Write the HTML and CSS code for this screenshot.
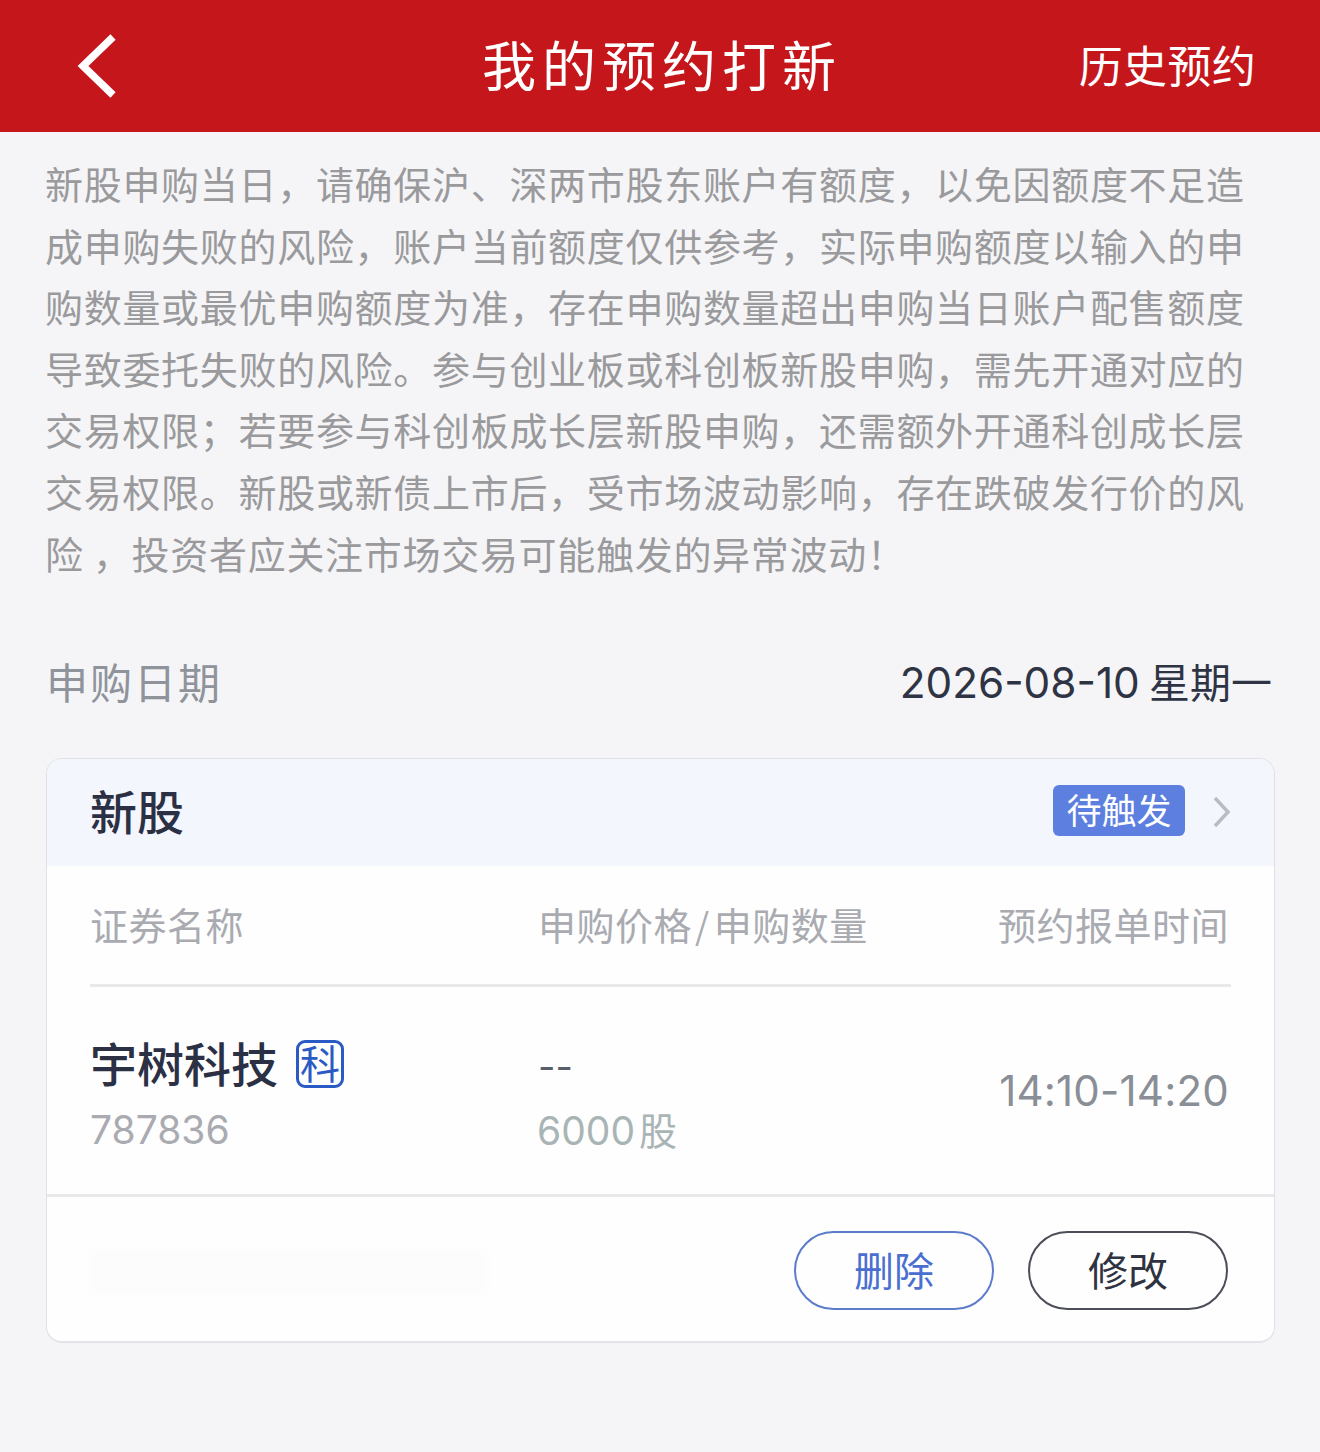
FILE: index.html
```html
<!DOCTYPE html>
<html lang="zh-CN">
<head>
<meta charset="utf-8">
<title>我的预约打新</title>
<link rel="stylesheet" href="styles.css">
</head>
<body>
<header class="topbar">
  <svg class="back" viewBox="0 0 40 64" width="40" height="64"><path d="M36 3 L6 32 L36 61" fill="none" stroke="#fff" stroke-width="7.5" stroke-linejoin="miter"/></svg>
  <h1 class="title">我的预约打新</h1>
  <span class="history">历史预约</span>
</header>
<main class="page">
  <div class="notice">
    <span class="ln">新股申购当日，请确保沪、深两市股东账户有额度，以免因额度不足造</span>
    <span class="ln">成申购失败的风险，账户当前额度仅供参考，实际申购额度以输入的申</span>
    <span class="ln">购数量或最优申购额度为准，存在申购数量超出申购当日账户配售额度</span>
    <span class="ln">导致委托失败的风险。参与创业板或科创板新股申购，需先开通对应的</span>
    <span class="ln">交易权限；若要参与科创板成长层新股申购，还需额外开通科创成长层</span>
    <span class="ln">交易权限。新股或新债上市后，受市场波动影响，存在跌破发行价的风</span>
    <span class="ln last">险 ，投资者应关注市场交易可能触发的异常波动！</span>
  </div>
  <div class="date-row">
    <span class="date-label">申购日期</span>
    <span class="date-value"><span class="date-num">2026-08-10</span> 星期一</span>
  </div>
  <section class="card">
    <div class="card-head">
      <span class="card-title">新股</span>
      <span class="status">待触发</span>
      <svg class="chev" viewBox="0 0 18 32" width="18" height="32"><path d="M2 2 L15 16 L2 30" fill="none" stroke="#b9bcc3" stroke-width="3.5"/></svg>
    </div>
    <div class="card-body">
      <div class="cols">
        <span class="c1">证券名称</span>
        <span class="c2">申购价格<span class="slash">/</span>申购数量</span>
        <span class="c3">预约报单时间</span>
      </div>
      <div class="row">
        <div class="c1 stack-name">
          <div class="name">宇树科技<span class="tag">科</span></div>
          <div class="code">787836</div>
        </div>
        <div class="c2 stack-qty">
          <div class="price">--</div>
          <div class="qty">6000<span class="unit">股</span></div>
        </div>
        <div class="c3 time">14:10-14:20</div>
      </div>
    </div>
    <div class="actions">
      <div class="smudge"></div>
      <button class="btn del">删除</button>
      <button class="btn edit">修改</button>
    </div>
  </section>
</main>
</body>
</html>
```
FILE: styles.css
```css
* { box-sizing: border-box; }
html, body { margin: 0; padding: 0; }
body {
  width: 1320px;
  height: 1452px;
  overflow: hidden;
  background: #f5f5f7;
  font-family: "Noto Sans CJK SC", "Liberation Sans", sans-serif;
}
.topbar {
  height: 132px;
  background: #c5161c;
  display: grid;
  grid-template-columns: 1fr auto 1fr;
  align-items: center;
  padding: 0 64px 4px 77px;
  color: #fff;
}
.title {
  margin: 0;
  padding-right: 9px;
  font-size: 54px;
  font-weight: 400;
  letter-spacing: 6px;
  line-height: 1;
}
.history { font-size: 44px; line-height: 1; justify-self: end; letter-spacing: 0.3px; }
.back { display: block; margin-top: 4px; }
.page { padding: 20px 46px 0 45px; }
.notice {
  color: #9a9a9d;
  font-size: 38px;
  line-height: 61.6px;
  width: 1199px;
}
.ln { display: block; text-align: justify; text-align-last: justify; white-space: nowrap; }
.ln.last { text-align-last: left; letter-spacing: 0.7px; }
.date-row {
  display: flex;
  justify-content: space-between;
  align-items: center;
  margin-top: 67px;
  height: 60px;
  padding: 0 2px 0 1px;
}
.date-label { font-size: 42px; color: #8f939b; letter-spacing: 2px; }
.date-value { font-size: 41px; color: #2f3445; }
.date-num { font-family: "Inter", sans-serif; font-size: 42.3px; }
.card {
  margin: 48px 0 0 1px;
  width: 1229px;
  height: 585px;
  border: 1.5px solid #dfe1e6;
  border-bottom: 2.5px solid #e3e4e8;
  border-radius: 16px;
  background: #fefefe;
  overflow: hidden;
  display: flex;
  flex-direction: column;
}
.card-head {
  height: 107px;
  background: #f3f6fc;
  display: flex;
  align-items: center;
  padding: 0 43px 0 43px;
}
.card-title { font-size: 47px; font-weight: 500; color: #2b3044; margin: -6px auto 0 0; line-height: 1; }
.status {
  background: #5d7fe0;
  color: #fff;
  font-size: 35px;
  line-height: 48px;
  height: 51px;
  width: 132px;
  text-align: center;
  border-radius: 6px;
  margin: -4px 28px 0 0;
}
.chev { display: block; margin-top: -2px; }
.card-body { padding: 0 43px; }
.cols {
  display: flex;
  height: 121px;
  align-items: center;
  border-bottom: 3px solid #e8e9eb;
  padding-bottom: 4px;
  color: #a9abb1;
  font-size: 38px;
  letter-spacing: 0.5px;
}
.c1 { width: 448px; }
.c2 { width: 360px; }
.c3 { flex: 1; text-align: right; padding-right: 2px; }
.slash { margin: 0 4px 0 3px; font-size: 36px; }
.row {
  display: flex;
  height: 210px;
  align-items: center;
  margin: 0 -43px;
  padding: 0 43px;
  border-bottom: 3px solid #e8e9eb;
}
.stack-name { padding-top: 7px; }
.stack-qty { padding-top: 12px; }
.name {
  font-size: 47px;
  font-weight: 500;
  color: #2b3044;
  line-height: 56px;
  display: flex;
  align-items: center;
}
.tag {
  margin: 4px 0 0 18px;
  width: 48px;
  height: 48px;
  border: 3px solid #2a5bc4;
  border-radius: 9px;
  color: #2a5bc4;
  font-size: 40px;
  font-weight: 400;
  line-height: 39px;
  text-align: center;
}
.code { font-size: 39px; color: #a9abb1; font-family: "Inter", sans-serif; margin-top: 15px; line-height: 50px; }
.price { font-size: 38px; color: #5a5e6a; line-height: 56px; font-family: "Inter", sans-serif; }
.qty { font-size: 39px; color: #a9b5b5; margin: 10px 0 0 -1px; line-height: 50px; font-family: "Inter", "Noto Sans CJK SC", sans-serif; }
.unit { margin-left: 4px; font-size: 38px; font-family: "Noto Sans CJK SC", sans-serif; }
.time { font-size: 42px; color: #8a8e96; font-family: "Inter", sans-serif; letter-spacing: 0.2px; }
.actions {
  flex: 1;
  display: flex;
  justify-content: flex-end;
  align-items: flex-start;
  gap: 34px;
  padding: 34px 46px 0 0;
}
.smudge {
  width: 396px;
  height: 44px;
  margin: 20px auto 0 44px;
  background: #fcfcfc;
  filter: blur(2px);
}
.btn {
  width: 200px;
  height: 79px;
  border-radius: 40px;
  background: transparent;
  font-family: inherit;
  font-size: 40px;
  line-height: 1;
  padding: 0 0 3px;
}
.del { border: 2px solid #5c7ccb; color: #4a6fd0; }
.edit { border: 2px solid #4b4e58; color: #2f3240; }
```
